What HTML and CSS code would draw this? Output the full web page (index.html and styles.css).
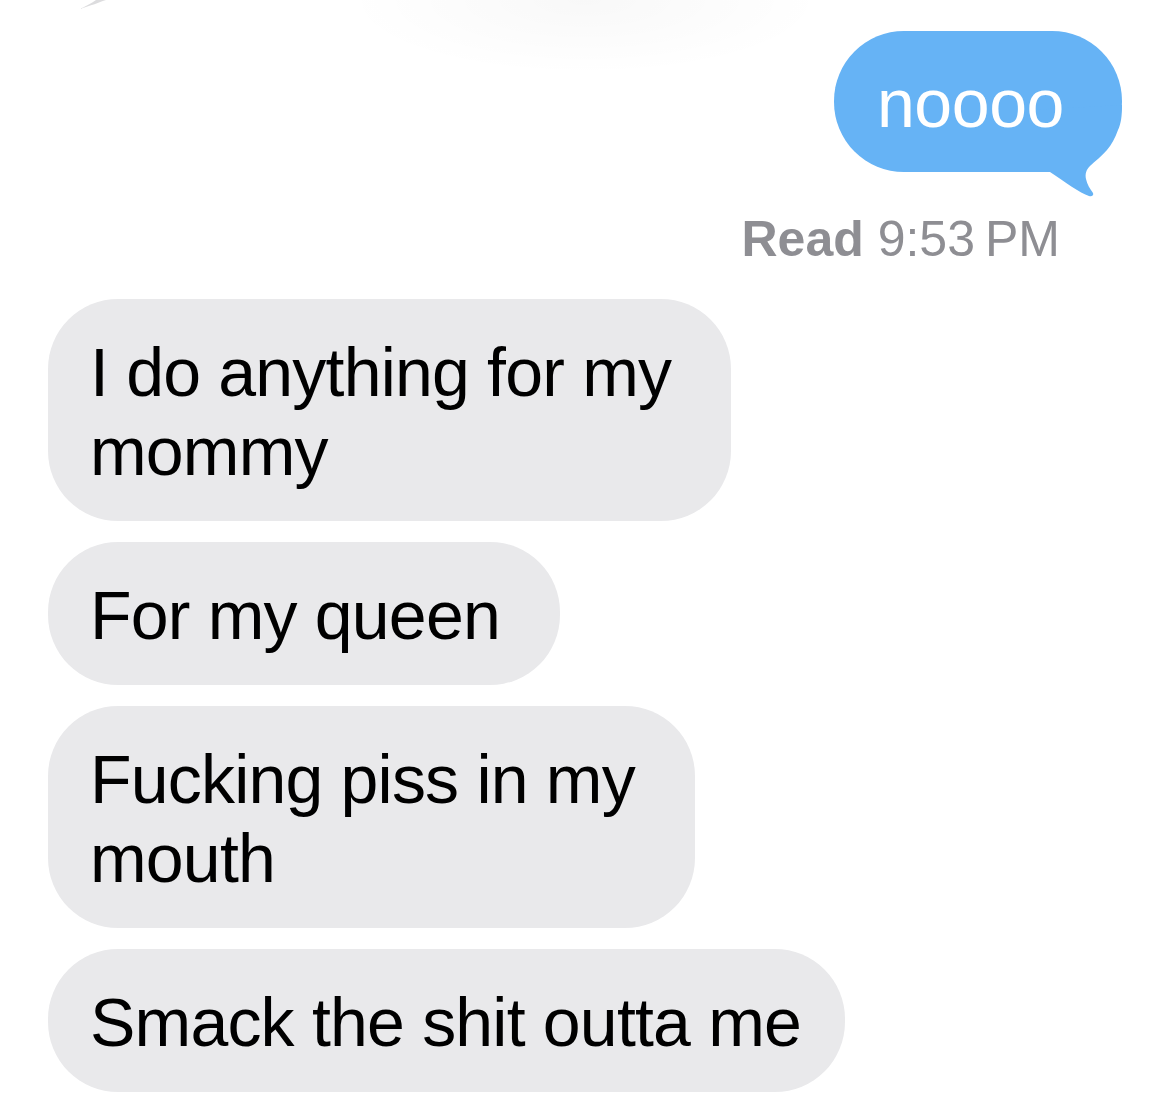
FILE: index.html
```html
<!DOCTYPE html>
<html lang="en">
<head>
<meta charset="utf-8">
<title>Messages</title>
<link rel="stylesheet" href="styles.css">
</head>
<body>
<svg class="prev-tail" width="60" height="12" viewBox="0 0 60 12"><path d="M30 9 C 40 6, 50 2, 56 0 L 46 0 C 42 3, 36 6, 30 9 Z" fill="#dcdcde"/></svg>
<main class="thread">
  <div class="bubble bubble--out">noooo<svg class="tail" width="110" height="100" viewBox="0 0 110 100"><path d="M10 10 L102 5 C 102 16, 101 24, 98 30 C 95 38, 92 44, 87 50 C 82 56, 75 61, 70 66 C 66 70, 65 74, 66 79 C 67 84, 70 89, 73 93 C 74 95, 72 97, 69 96 C 60 93, 45 82, 30 72 L10 72 Z" fill="#66b3f5"/></svg></div>
  <div class="receipt"><b>Read</b> 9:53&#8201;PM</div>
  <div class="bubble bubble--in bubble--first">I do anything for my<br>mommy</div>
  <div class="bubble bubble--in">For my queen</div>
  <div class="bubble bubble--in">Fucking piss in my<br>mouth</div>
  <div class="bubble bubble--in bubble--full">Smack the shit outta me</div>
</main>
</body>
</html>
```
FILE: styles.css
```css
html, body {
  margin: 0;
  background: #fff;
}
body {
  position: relative;
  font-family: "Liberation Sans", Arial, sans-serif;
  background: radial-gradient(ellipse 240px 75px at 585px 0, rgba(0,0,0,0.028), rgba(0,0,0,0) 100%) no-repeat, #fff;
  min-height: 1094px;
}
.prev-tail {
  position: absolute;
  left: 50px;
  top: 0;
  filter: blur(0.6px);
}
.thread {
  display: flex;
  flex-direction: column;
  padding: 31px 48px 0;
}
.bubble {
  position: relative;
  font-size: 68px;
  line-height: 79px;
  border-radius: 70px;
  width: fit-content;
  letter-spacing: -0.8px;
}
.bubble--out {
  align-self: flex-end;
  background: #66b3f5;
  color: #fff;
  padding: 33px 58px 29px 43px;
  letter-spacing: -0.4px;
  isolation: isolate;
}
.tail {
  position: absolute;
  left: 186px;
  top: 69px;
  z-index: -1;
}
.receipt {
  align-self: flex-end;
  margin: 37px 62px 0 0;
  font-size: 50px;
  line-height: 60px;
  color: #8e8e93;
}
.receipt b {
  font-weight: 700;
}
.bubble--in {
  align-self: flex-start;
  background: #e9e9eb;
  color: #000;
  padding: 34px 60px 30px 42px;
  margin-top: 21px;
}
.bubble--first {
  margin-top: 30px;
}
.bubble--full {
  padding-right: 44px;
}
```
